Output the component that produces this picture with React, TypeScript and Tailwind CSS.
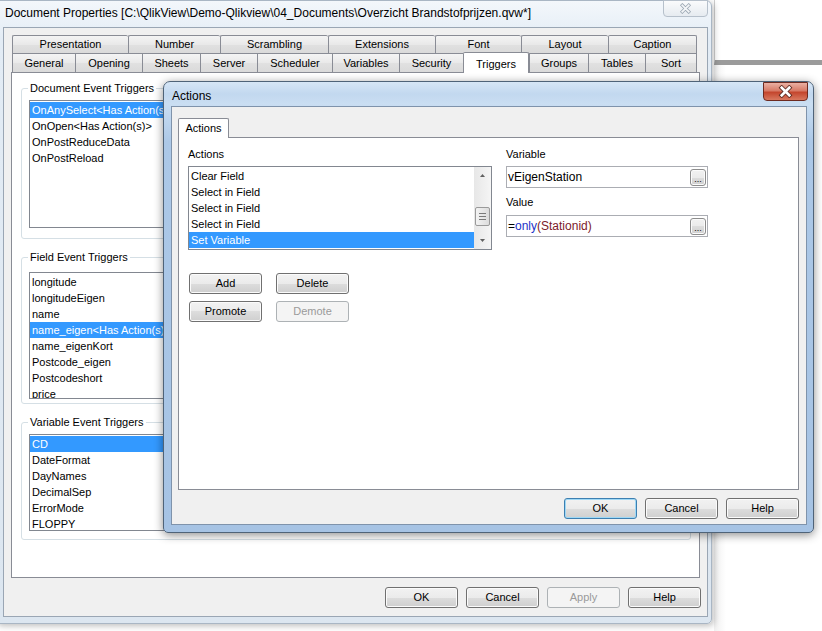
import React from 'react';

const ui = "font-['Liberation_Sans',Arial,sans-serif]";

const btnFace =
  'bg-[linear-gradient(#f2f2f2,#ebebeb_50%,#dddddd_50%,#cfcfcf)] shadow-[inset_0_0_0_1px_#fbfbfb]';

function Button({ label, disabled, primary }: { label: string; disabled?: boolean; primary?: boolean }) {
  let cls = `border-[#707070] text-black ${btnFace}`;
  if (disabled) cls = 'border-[#adb2b5] bg-[#f4f4f4] text-[#9a9a9a]';
  if (primary)
    cls =
      'border-[#3c7fb1] text-black bg-[linear-gradient(#f2f2f2,#ebebeb_50%,#dddddd_50%,#cfcfcf)] shadow-[inset_0_0_0_1px_#9fd8f5]';
  return (
    <div className={`flex h-[21px] w-[73px] items-center justify-center rounded-[3px] border text-[11px] ${cls}`}>
      {label}
    </div>
  );
}

function ListBox({ items, selected, className }: { items: string[]; selected: number; className: string }) {
  return (
    <div className={`overflow-hidden border border-[#828790] bg-white pt-px ${className}`}>
      {items.map((t, i) => (
        <div
          key={t + i}
          className={`h-[16px] whitespace-nowrap pl-[2px] text-[11px] leading-[16px] ${
            i === selected ? 'bg-[#3399ff] text-white' : 'text-black'
          }`}
        >
          {t}
        </div>
      ))}
    </div>
  );
}

function Group({ title, children, className }: { title: string; children: React.ReactNode; className?: string }) {
  return (
    <fieldset className={`w-[670px] rounded-[3px] border border-[#d5dfe5] ${className ?? ''}`}>
      <legend className="ml-[6px] px-[2px] text-[11px] leading-[13px] text-black">{title}</legend>
      {children}
    </fieldset>
  );
}

const row1: [string, number][] = [
  ['Presentation', 116],
  ['Number', 92],
  ['Scrambling', 108],
  ['Extensions', 107],
  ['Font', 86],
  ['Layout', 87],
  ['Caption', 89],
];

const row2: [string, number][] = [
  ['General', 63],
  ['Opening', 67],
  ['Sheets', 58],
  ['Server', 57],
  ['Scheduler', 75],
  ['Variables', 67],
  ['Security', 64],
  ['Triggers', 66],
  ['Groups', 59],
  ['Tables', 57],
  ['Sort', 52],
];

const tabFace = 'bg-[linear-gradient(#f4f4f4,#e9e9e9_50%,#e1e1e1_50%,#dadada)]';

function Browse() {
  return (
    <div
      className={`ml-auto mr-px flex h-[17px] w-[16px] items-end justify-center rounded-[3px] border border-[#8d8d8d] pb-[3px] text-[9px] leading-[6px] ${btnFace}`}
    >
      ...
    </div>
  );
}

function XGlyph({ color, outline, w, size }: { color: string; outline: string; w: number; size: number }) {
  return (
    <svg width={size + 4} height={size} viewBox="0 0 14 12">
      <path d="M3.5 2.5 L10.5 9.5 M10.5 2.5 L3.5 9.5" stroke={outline} strokeWidth={w + 1.6} strokeLinecap="square" fill="none" />
      <path d="M3.5 2.5 L10.5 9.5 M10.5 2.5 L3.5 9.5" stroke={color} strokeWidth={w} strokeLinecap="square" fill="none" />
    </svg>
  );
}

export default function App() {
  return (
    <div className={`relative h-[631px] w-[822px] overflow-hidden bg-white ${ui}`}>
      {/* desktop window behind, right side */}
      <div className="absolute left-[714px] top-0 h-[65px] w-[120px] border-b-[5px] border-l border-b-[#9b9b9b] border-l-[#cfcfcf] bg-white" />
      <div className="absolute left-[714px] top-[65px] h-[570px] w-[120px] bg-[linear-gradient(90deg,#f0f0f0,#ffffff_12px)]" />

      {/* Document Properties window */}
      <div className="absolute left-[-5px] top-0 h-[624px] w-[717px] rounded-b-[5px] rounded-tr-[6px] border border-[#a9b6c4] bg-[linear-gradient(180deg,#f3f7fb,#e3ecf5_40px,#dce6f0)] shadow-[2px_2px_6px_rgba(0,0,0,0.25)]">
        <div className="flex h-[26px] items-start pl-[9px] pt-[5px] text-[12px] leading-[15px] text-black">
          Document Properties [C:\QlikView\Demo-Qlikview\04_Documents\Overzicht Brandstofprijzen.qvw*]
        </div>
        <div className="absolute right-[3px] top-[-1px] flex h-[17px] w-[45px] items-center justify-center rounded-b-[4px] border border-[#b6c0cb] bg-[linear-gradient(#fafbfc,#e6ebf0)]">
          <XGlyph color="#f4f6f8" outline="#9aa6b2" w={2} size={11} />
        </div>

        <div className="ml-[7px] h-[590px] w-[705px] border border-[#9aa6b4] bg-[#f0f0f0] pl-[7px] pt-[7px]">
          {/* tab rows */}
          <div className="ml-px flex h-[18px]">
            {row1.map(([t, w], i) => (
              <div
                key={t}
                style={{ width: w }}
                className={`flex h-[18px] items-center justify-center rounded-t-[2px] border-l border-t border-[#898c95] text-[11px] text-black ${tabFace} ${
                  i === row1.length - 1 ? 'border-r' : ''
                }`}
              >
                {t}
              </div>
            ))}
          </div>
          <div className="ml-px flex h-[19px] items-start">
            {row2.map(([t, w], i) =>
              t === 'Triggers' ? (
                <div
                  key={t}
                  style={{ width: w }}
                  className="relative z-10 -mt-px flex h-[21px] items-start justify-center rounded-t-[2px] border-x border-t border-[#898c95] bg-white pt-[3px] text-[11px] text-black"
                >
                  {t}
                </div>
              ) : (
                <div
                  key={t}
                  style={{ width: w }}
                  className={`flex h-[19px] items-center justify-center border-l border-t border-[#898c95] text-[11px] text-black ${tabFace} ${
                    i === row2.length - 1 ? 'border-r' : ''
                  }`}
                >
                  {t}
                </div>
              )
            )}
          </div>

          {/* tab panel */}
          <div className="h-[506px] w-[689px] border border-[#898c95] bg-white pl-[9px] pt-[9px]">
            <Group title="Document Event Triggers">
              <ListBox
                className="mb-[10px] ml-[7px] mt-[5px] h-[128px] w-[300px]"
                selected={0}
                items={['OnAnySelect<Has Action(s)>', 'OnOpen<Has Action(s)>', 'OnPostReduceData', 'OnPostReload']}
              />
            </Group>
            <Group title="Field Event Triggers" className="mt-[12px]">
              <ListBox
                className="mb-[4px] ml-[7px] mt-[8px] h-[127px] w-[300px]"
                selected={3}
                items={[
                  'longitude',
                  'longitudeEigen',
                  'name',
                  'name_eigen<Has Action(s)>',
                  'name_eigenKort',
                  'Postcode_eigen',
                  'Postcodeshort',
                  'price',
                ]}
              />
            </Group>
            <Group title="Variable Event Triggers" className="mt-[12px]">
              <ListBox
                className="mb-[8px] ml-[7px] mt-[5px] h-[97px] w-[300px]"
                selected={0}
                items={['CD', 'DateFormat', 'DayNames', 'DecimalSep', 'ErrorMode', 'FLOPPY']}
              />
            </Group>
          </div>

          <div className="mt-[9px] flex w-[690px] justify-end gap-[8px]">
            <Button label="OK" />
            <Button label="Cancel" />
            <Button label="Apply" disabled />
            <Button label="Help" />
          </div>
        </div>
      </div>

      {/* Actions dialog */}
      <div className="absolute left-[163px] top-[81px] h-[452px] w-[651px] rounded-b-[5px] rounded-t-[7px] border border-[#4f6378] bg-[linear-gradient(180deg,#d6e6f6,#c2d8ef_12px,#cadef2_22px,#acc8e7_60px,#a6c3e4)] shadow-[0_2px_10px_rgba(0,0,0,0.45)]">
        <div className="flex h-[24px] items-center pl-[8px] pt-[3px] text-[12px] text-black">Actions</div>
        <div className="absolute right-[5px] top-0 flex h-[19px] w-[45px] items-center justify-center rounded-b-[4px] border border-[#6d2a20] bg-[linear-gradient(#eab0a3,#d77a66_45%,#c4462e_55%,#d8785f)]">
          <XGlyph color="#ffffff" outline="#5a2a22" w={2.4} size={13} />
        </div>

        <div className="ml-[7px] h-[419px] w-[636px] border border-[#7f93ab] bg-[#f0f0f0] pl-[6px] pt-[11px]">
          <div className="relative z-10 -mb-px flex h-[20px] w-[51px] items-center justify-center rounded-t-[2px] border-x border-t border-[#898c95] bg-white text-[11px] text-black">
            Actions
          </div>
          <div className="h-[353px] w-[621px] border border-[#898c95] bg-white pl-[9px] pt-[10px]">
            <div className="flex">
              <div className="w-[304px]">
                <div className="text-[11px] leading-[13px] text-black">Actions</div>
                <div className="mt-[5px] flex h-[84px] border border-[#828790] bg-white">
                  <div className="flex-1 pt-px">
                    {['Clear Field', 'Select in Field', 'Select in Field', 'Select in Field', 'Set Variable'].map((t, i) => (
                      <div
                        key={i}
                        className={`h-[16px] whitespace-nowrap pl-[2px] text-[11px] leading-[16px] ${
                          i === 4 ? 'bg-[#3399ff] text-white' : 'text-black'
                        }`}
                      >
                        {t}
                      </div>
                    ))}
                  </div>
                  {/* scrollbar */}
                  <div className="flex w-[17px] flex-col items-center bg-[linear-gradient(90deg,#e7e7e7,#f5f5f5)]">
                    <svg width="17" height="17" viewBox="0 0 17 17">
                      <path d="M6 10 L8.5 7 L11 10 Z" fill="#606060" />
                    </svg>
                    <div className="mt-[23px] flex h-[19px] w-[15px] flex-col items-center justify-center gap-[2px] rounded-[2px] border border-[#9a9a9a] bg-[linear-gradient(90deg,#f3f3f3,#dcdcdc)]">
                      <div className="h-px w-[7px] bg-[#7a7a7a]" />
                      <div className="h-px w-[7px] bg-[#7a7a7a]" />
                      <div className="h-px w-[7px] bg-[#7a7a7a]" />
                    </div>
                    <svg className="mt-auto" width="17" height="17" viewBox="0 0 17 17">
                      <path d="M6 7 L8.5 10 L11 7 Z" fill="#606060" />
                    </svg>
                  </div>
                </div>
              </div>

              <div className="ml-[14px] w-[202px]">
                <div className="text-[11px] leading-[13px] text-black">Variable</div>
                <div className="mt-[5px] flex h-[22px] items-center border border-[#abadb3] bg-white pl-px text-[12px] text-black">
                  vEigenStation
                  <Browse />
                </div>
                <div className="mt-[8px] text-[11px] leading-[13px] text-black">Value</div>
                <div className="mt-[6px] flex h-[22px] items-center border border-[#abadb3] bg-white pl-px text-[12px] text-black">
                  <span>=</span>
                  <span className="text-[#1c32c8]">only</span>
                  <span className="text-[#7c1a2a]">(Stationid)</span>
                  <Browse />
                </div>
              </div>
            </div>

            <div className="ml-px mt-[23px] flex gap-[14px]">
              <Button label="Add" />
              <Button label="Delete" />
            </div>
            <div className="ml-px mt-[7px] flex gap-[14px]">
              <Button label="Promote" />
              <Button label="Demote" disabled />
            </div>
          </div>

          <div className="mt-[8px] flex w-[621px] justify-end gap-[8px]">
            <Button label="OK" primary />
            <Button label="Cancel" />
            <Button label="Help" />
          </div>
        </div>
      </div>
    </div>
  );
}
